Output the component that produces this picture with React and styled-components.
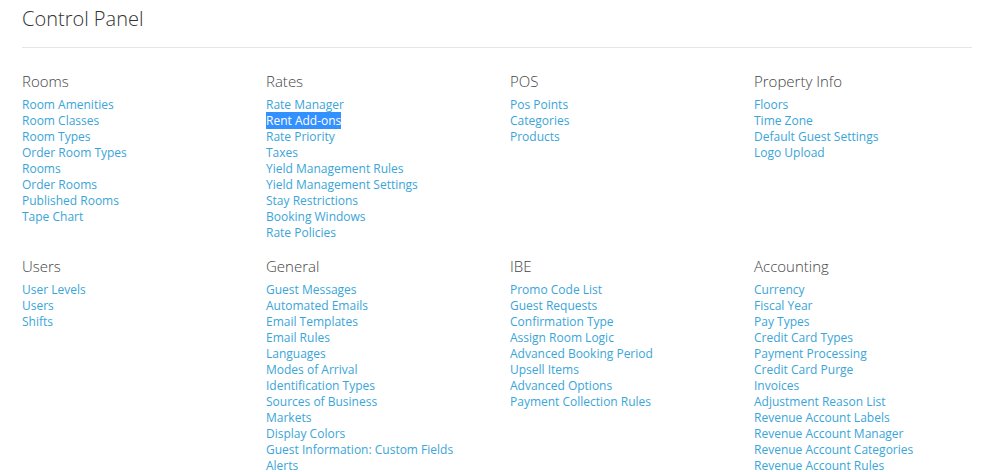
import styled, { createGlobalStyle } from "styled-components";

const GlobalStyle = createGlobalStyle`
    body {
        margin: 0;
        background: #ffffff;
        font-family: "Open Sans", "Liberation Sans", sans-serif;
    }
`

const StylePage = styled.div`
    padding: 5px 0 0 22px;
`

const StyleTitle = styled.h1`
    margin: 0;
    font-size: 20px;
    line-height: 28px;
    font-weight: 300;
    color: #333333;
`

const StyleRule = styled.hr`
    width: 950px;
    margin: 14px 0 23px 0;
    border: 0;
    border-top: 1px solid #e6e6e6;
`

const StyleGrid = styled.div`
    display: grid;
    grid-template-columns: repeat(4, 244px);
    row-gap: 15px;
`

const StyleHeading = styled.h3`
    margin: 0 0 6px 0;
    font-size: 15px;
    line-height: 20px;
    font-weight: 300;
    color: #444444;
`

const StyleList = styled.ul`
    list-style: none;
    margin: 0;
    padding: 0;
    font-size: 12px;
    line-height: 16px;
`

const StyleLink = styled.a`
    color: ${(p) => (p.$selected ? "#ffffff" : "#3aa5d8")};
    background: ${(p) => (p.$selected ? "#3390ff" : "transparent")};
    text-decoration: none;
    cursor: pointer;
`

const sections = [
    { title: "Rooms", items: ["Room Amenities", "Room Classes", "Room Types", "Order Room Types", "Rooms", "Order Rooms", "Published Rooms", "Tape Chart"] },
    { title: "Rates", items: ["Rate Manager", "Rent Add-ons", "Rate Priority", "Taxes", "Yield Management Rules", "Yield Management Settings", "Stay Restrictions", "Booking Windows", "Rate Policies"] },
    { title: "POS", items: ["Pos Points", "Categories", "Products"] },
    { title: "Property Info", items: ["Floors", "Time Zone", "Default Guest Settings", "Logo Upload"] },
    { title: "Users", items: ["User Levels", "Users", "Shifts"] },
    { title: "General", items: ["Guest Messages", "Automated Emails", "Email Templates", "Email Rules", "Languages", "Modes of Arrival", "Identification Types", "Sources of Business", "Markets", "Display Colors", "Guest Information: Custom Fields", "Alerts"] },
    { title: "IBE", items: ["Promo Code List", "Guest Requests", "Confirmation Type", "Assign Room Logic", "Advanced Booking Period", "Upsell Items", "Advanced Options", "Payment Collection Rules"] },
    { title: "Accounting", items: ["Currency", "Fiscal Year", "Pay Types", "Credit Card Types", "Payment Processing", "Credit Card Purge", "Invoices", "Adjustment Reason List", "Revenue Account Labels", "Revenue Account Manager", "Revenue Account Categories", "Revenue Account Rules"] },
]

export default function App() {
    return (
        <StylePage>
            <GlobalStyle />
            <StyleTitle>Control Panel</StyleTitle>
            <StyleRule />
            <StyleGrid>
                {sections.map((s) => (
                    <section key={s.title}>
                        <StyleHeading>{s.title}</StyleHeading>
                        <StyleList>
                            {s.items.map((item) => (
                                <li key={item}>
                                    <StyleLink $selected={item === "Rent Add-ons"}>{item}</StyleLink>
                                </li>
                            ))}
                        </StyleList>
                    </section>
                ))}
            </StyleGrid>
        </StylePage>
    )
}
